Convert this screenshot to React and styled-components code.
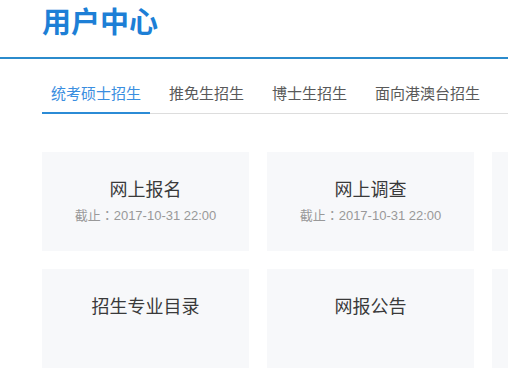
import React, { useState } from "react";
import styled, { createGlobalStyle } from "styled-components";

const Global = createGlobalStyle`
  html, body { margin: 0; padding: 0; background: #fff; overflow: hidden; }
  body { font-family: "Liberation Sans", "Noto Sans CJK SC", sans-serif; }
`;

const Page = styled.div`
  width: 1200px;
`;

const Header = styled.header`
  height: 57px;
  padding-left: 42px;
  border-bottom: 2px solid #2b8bcc;
`;

const Title = styled.h1`
  margin: 0;
  font-family: "Noto Sans CJK SC", sans-serif;
  font-size: 29px;
  font-weight: 700;
  line-height: 40px;
  color: #1d7fd6;
`;

const Main = styled.main`
  padding: 15px 0 0 42px;
`;

const TabBar = styled.nav`
  display: flex;
  gap: 10px;
  border-bottom: 1px solid #dddddd;
`;

const Tab = styled.button`
  appearance: none;
  background: none;
  border: none;
  border-bottom: 2px solid ${(p) => (p.$active ? "#2b8bd6" : "transparent")};
  margin: 0 0 -1px;
  padding: 0 9px;
  height: 40px;
  line-height: 38px;
  font-family: "Noto Sans CJK SC", sans-serif;
  font-size: 15px;
  color: ${(p) => (p.$active ? "#3a8ee0" : "#595959")};
  cursor: pointer;
`;

const Grid = styled.section`
  display: grid;
  grid-template-columns: repeat(3, 207px);
  grid-auto-rows: 99px;
  gap: 18px;
  margin-top: 38px;
`;

const Card = styled.a`
  display: flex;
  flex-direction: column;
  align-items: center;
  padding-top: 24px;
  box-sizing: border-box;
  background: #f7f8fa;
  text-decoration: none;
  cursor: pointer;
`;

const CardTitle = styled.div`
  font-family: "Noto Sans CJK SC", sans-serif;
  font-size: 18px;
  line-height: 24px;
  color: #3a3a3a;
`;

const CardMeta = styled.div`
  margin-top: 6px;
  font-family: "Liberation Sans", "Noto Sans CJK TC", sans-serif;
  font-size: 13px;
  line-height: 20px;
  color: #999999;
`;

const tabs = ["统考硕士招生", "推免生招生", "博士生招生", "面向港澳台招生"];

const cards = [
  { title: "网上报名", meta: "截止：2017-10-31 22:00" },
  { title: "网上调查", meta: "截止：2017-10-31 22:00" },
  { title: "" },
  { title: "招生专业目录" },
  { title: "网报公告" },
  { title: "" },
];

export default function App() {
  const [active, setActive] = useState(0);
  return (
    <Page>
      <Global />
      <Header>
        <Title>用户中心</Title>
      </Header>
      <Main>
        <TabBar>
          {tabs.map((t, i) => (
            <Tab key={t} $active={i === active} onClick={() => setActive(i)}>
              {t}
            </Tab>
          ))}
        </TabBar>
        <Grid>
          {cards.map((c, i) => (
            <Card key={i}>
              {c.title && <CardTitle>{c.title}</CardTitle>}
              {c.meta && <CardMeta>{c.meta}</CardMeta>}
            </Card>
          ))}
        </Grid>
      </Main>
    </Page>
  );
}
